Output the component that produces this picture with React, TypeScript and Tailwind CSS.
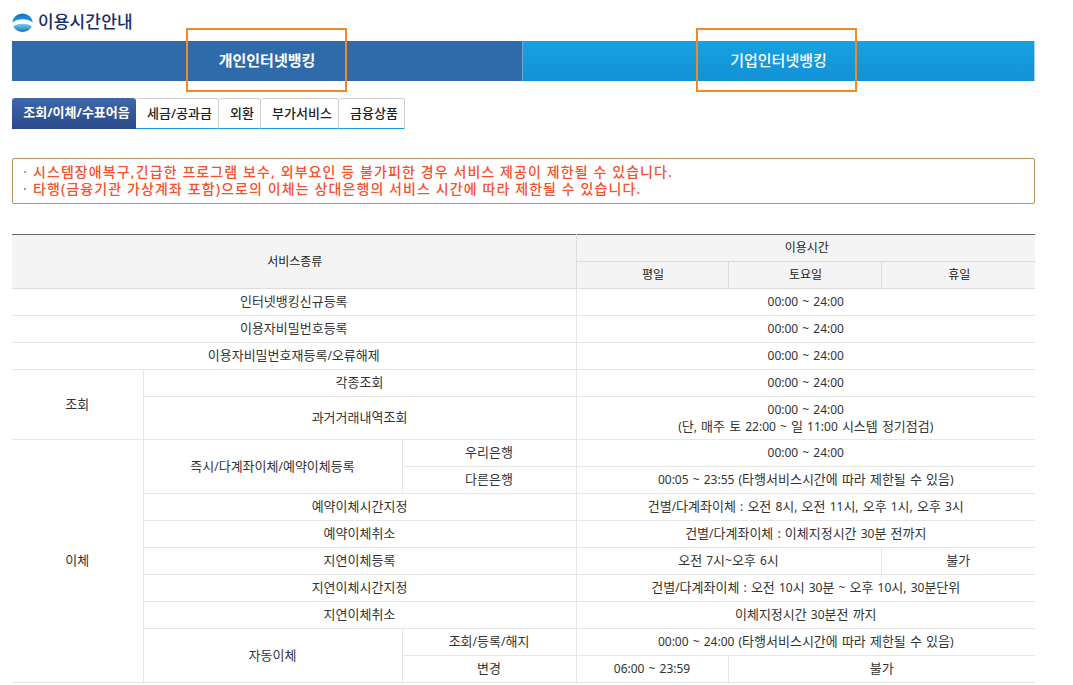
const td = "border-b border-r border-[#e6e6e6] text-center align-middle p-0 last:border-r-0";
const th = "border-b border-r border-[#dcdcdc] bg-[#f4f4f4] text-center align-middle p-0 pl-[2px] font-normal text-[12px] text-[#222] last:border-r-0";

function Logo() {
  return (
    <svg width="21" height="21" viewBox="0 0 21 21" className="shrink-0">
      <defs>
        <linearGradient id="lgTop" x1="0" y1="0" x2="0" y2="1">
          <stop offset="0" stopColor="#1270ba" />
          <stop offset="1" stopColor="#23a2e6" />
        </linearGradient>
        <linearGradient id="lgBottom" x1="0" y1="0" x2="0" y2="1">
          <stop offset="0" stopColor="#7ccdf0" />
          <stop offset="1" stopColor="#1476bf" />
        </linearGradient>
      </defs>
      <path d="M0.1 11.5 A10.5 10.5 0 0 1 20.9 11.5 C15 7 6 7 0.1 11.5 Z" fill="url(#lgTop)" />
      <path d="M1.2 15.3 C6 12 15 12 19.8 15.3 A10.5 10.5 0 0 1 1.2 15.3 Z" fill="url(#lgBottom)" />
    </svg>
  );
}

function SubTab({ label, w, active }: { label: string; w: string; active?: boolean }) {
  return (
    <div
      className={
        active
          ? `${w} h-[31px] flex items-center justify-center pl-[5px] rounded-t-[3px] bg-gradient-to-b from-[#3e68ab] to-[#2a4a8c] text-white font-bold border-b border-[#2a4a8c]`
          : `${w} h-[31px] flex items-center justify-center pl-[5px] rounded-t-[3px] bg-white text-[#222] font-medium border border-l-0 border-[#cfcfcf] border-b-[#1a9ae0]`
      }
    >
      {label}
    </div>
  );
}

// Latin text and digits are set smaller than the Hangul around them, as in the reference font.
function T({ s }: { s: string }) {
  return (
    <>
      {s.split(/([\uAC00-\uD7A3]+)/).map((part, i) =>
        i % 2 === 1 ? (
          <span key={i}>{part}</span>
        ) : (
          <span key={i} className="text-[12px] [word-spacing:1px]">{part}</span>
        )
      )}
    </>
  );
}

export default function App() {
  return (
    <div className="w-[1073px] h-[685px] overflow-hidden bg-white font-['Noto_Sans','Noto_Sans_CJK_KR',sans-serif] text-[13px] text-[#333] pl-3 pr-[38px]">
      <div className="h-[41px] flex items-start pt-[11px] gap-[5px]">
        <Logo />
        <div className="text-[17px] leading-[22px] font-medium text-[#16306b] tracking-[0.15px]">이용시간안내</div>
      </div>

      <div className="relative flex h-10 text-white text-[15px] font-bold">
        <div className="w-[511px] flex items-center justify-center bg-[#2f6bab] border-r border-[#6fa6d6] pb-[1px]">개인인터넷뱅킹</div>
        <div className="flex-1 flex items-center justify-center bg-gradient-to-b from-[#16a2e2] to-[#1391d6] border-r border-[#9fd4f2] font-medium pb-[1px]">기업인터넷뱅킹</div>
        <div className="absolute left-[174px] top-[-13px] w-[161px] h-[64px] border-2 border-[#ef8a2c]" />
        <div className="absolute left-[684px] top-[-13px] w-[161px] h-[64px] border-2 border-[#ef8a2c]" />
      </div>

      <div className="flex mt-[17px] text-[13px]">
        <SubTab label="조회/이체/수표어음" w="w-[124px]" active />
        <SubTab label="세금/공과금" w="w-[83px]" />
        <SubTab label="외환" w="w-[42px]" />
        <SubTab label="부가서비스" w="w-[78px]" />
        <SubTab label="금융상품" w="w-[66px]" />
      </div>

      <div className="mt-[29px] h-[46px] border border-[#b8905c] rounded-[2px] pl-[10px] pb-[2px] flex flex-col justify-center text-[14px] leading-[17px] text-[#f4512c] font-medium tracking-[1.1px]">
        <div><span className="text-[#888] mr-[5px]">·</span>시스템장애복구,긴급한 프로그램 보수, 외부요인 등 불가피한 경우 서비스 제공이 제한될 수 있습니다.</div>
        <div><span className="text-[#888] mr-[5px]">·</span>타행(금융기관 가상계좌 포함)으로의 이체는 상대은행의 서비스 시간에 따라 제한될 수 있습니다.</div>
      </div>

      <table className="mt-[30px] w-[1023px] table-fixed border-collapse border-t border-t-[#666]">
        <colgroup>
          <col className="w-[131px]" />
          <col className="w-[259px]" />
          <col className="w-[174px]" />
          <col className="w-[152px]" />
          <col className="w-[153px]" />
          <col className="w-[154px]" />
        </colgroup>
        <tbody>
          <tr className="h-[27px]">
            <th colSpan={3} rowSpan={2} className={th}>서비스종류</th>
            <th colSpan={3} className={th}>이용시간</th>
          </tr>
          <tr className="h-[27px]">
            <th className={th}>평일</th>
            <th className={th}>토요일</th>
            <th className={th}>휴일</th>
          </tr>
          <tr className="h-[27px]">
            <td colSpan={3} className={td}>인터넷뱅킹신규등록</td>
            <td colSpan={3} className={td}><T s="00:00 ~ 24:00" /></td>
          </tr>
          <tr className="h-[27px]">
            <td colSpan={3} className={td}>이용자비밀번호등록</td>
            <td colSpan={3} className={td}><T s="00:00 ~ 24:00" /></td>
          </tr>
          <tr className="h-[27px]">
            <td colSpan={3} className={td}><T s="이용자비밀번호재등록/오류해제" /></td>
            <td colSpan={3} className={td}><T s="00:00 ~ 24:00" /></td>
          </tr>
          <tr className="h-[27px]">
            <td rowSpan={2} className={td}>조회</td>
            <td colSpan={2} className={td}>각종조회</td>
            <td colSpan={3} className={td}><T s="00:00 ~ 24:00" /></td>
          </tr>
          <tr className="h-[43px]">
            <td colSpan={2} className={td}>과거거래내역조회</td>
            <td colSpan={3} className={`${td} leading-[16px]`}><T s="00:00 ~ 24:00" /><br /><T s="(단, 매주 토 22:00 ~ 일 11:00 시스템 정기점검)" /></td>
          </tr>
          <tr className="h-[27px]">
            <td rowSpan={10} className={td}>이체</td>
            <td rowSpan={2} className={td}><T s="즉시/다계좌이체/예약이체등록" /></td>
            <td className={td}>우리은행</td>
            <td colSpan={3} className={td}><T s="00:00 ~ 24:00" /></td>
          </tr>
          <tr className="h-[27px]">
            <td className={td}>다른은행</td>
            <td colSpan={3} className={td}><T s="00:05 ~ 23:55 (타행서비스시간에 따라 제한될 수 있음)" /></td>
          </tr>
          <tr className="h-[27px]">
            <td colSpan={2} className={td}>예약이체시간지정</td>
            <td colSpan={3} className={td}><T s="건별/다계좌이체 : 오전 8시, 오전 11시, 오후 1시, 오후 3시" /></td>
          </tr>
          <tr className="h-[27px]">
            <td colSpan={2} className={td}>예약이체취소</td>
            <td colSpan={3} className={td}><T s="건별/다계좌이체 : 이체지정시간 30분 전까지" /></td>
          </tr>
          <tr className="h-[27px]">
            <td colSpan={2} className={td}>지연이체등록</td>
            <td colSpan={2} className={td}><T s="오전 7시~오후 6시" /></td>
            <td className={td}>불가</td>
          </tr>
          <tr className="h-[27px]">
            <td colSpan={2} className={td}>지연이체시간지정</td>
            <td colSpan={3} className={td}><T s="건별/다계좌이체 : 오전 10시 30분 ~ 오후 10시, 30분단위" /></td>
          </tr>
          <tr className="h-[27px]">
            <td colSpan={2} className={td}>지연이체취소</td>
            <td colSpan={3} className={td}><T s="이체지정시간 30분전 까지" /></td>
          </tr>
          <tr className="h-[27px]">
            <td rowSpan={2} className={td}>자동이체</td>
            <td className={td}><T s="조회/등록/해지" /></td>
            <td colSpan={3} className={td}><T s="00:00 ~ 24:00 (타행서비스시간에 따라 제한될 수 있음)" /></td>
          </tr>
          <tr className="h-[27px]">
            <td className={td}>변경</td>
            <td className={td}><T s="06:00 ~ 23:59" /></td>
            <td colSpan={2} className={td}>불가</td>
          </tr>
        </tbody>
      </table>
    </div>
  );
}
